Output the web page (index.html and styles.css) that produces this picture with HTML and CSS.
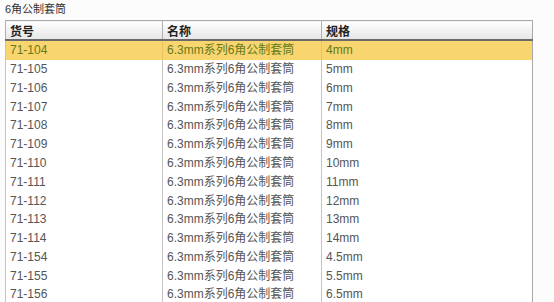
FILE: index.html
```html
<!DOCTYPE html>
<html>
<head>
<meta charset="utf-8">
<link rel="stylesheet" href="styles.css">
</head>
<body>
<div class="title">6角公制套筒</div>
<table class="grid">
<thead>
<tr><th class="c1">货号</th><th class="c2">名称</th><th class="c3">规格</th></tr>
</thead>
<tbody>
<tr class="sel"><td>71-104</td><td>6.3mm系列6角公制套筒</td><td>4mm</td></tr>
<tr><td>71-105</td><td>6.3mm系列6角公制套筒</td><td>5mm</td></tr>
<tr><td>71-106</td><td>6.3mm系列6角公制套筒</td><td>6mm</td></tr>
<tr><td>71-107</td><td>6.3mm系列6角公制套筒</td><td>7mm</td></tr>
<tr><td>71-108</td><td>6.3mm系列6角公制套筒</td><td>8mm</td></tr>
<tr><td>71-109</td><td>6.3mm系列6角公制套筒</td><td>9mm</td></tr>
<tr><td>71-110</td><td>6.3mm系列6角公制套筒</td><td>10mm</td></tr>
<tr><td>71-111</td><td>6.3mm系列6角公制套筒</td><td>11mm</td></tr>
<tr><td>71-112</td><td>6.3mm系列6角公制套筒</td><td>12mm</td></tr>
<tr><td>71-113</td><td>6.3mm系列6角公制套筒</td><td>13mm</td></tr>
<tr><td>71-114</td><td>6.3mm系列6角公制套筒</td><td>14mm</td></tr>
<tr><td>71-154</td><td>6.3mm系列6角公制套筒</td><td>4.5mm</td></tr>
<tr><td>71-155</td><td>6.3mm系列6角公制套筒</td><td>5.5mm</td></tr>
<tr><td>71-156</td><td>6.3mm系列6角公制套筒</td><td>6.5mm</td></tr>
</tbody>
</table>
</body>
</html>
```
FILE: styles.css
```css
html, body {
  margin: 0;
  background: #fcfcfc;
}
body {
  padding: 2px 5px 0 5px;
  font-family: "Liberation Sans", "Noto Sans CJK SC", sans-serif;
  color: #555;
}
.title {
  font-size: 11px;
  line-height: 14px;
  color: #333;
  padding-left: 0;
  height: 18px;
}
.grid {
  border-collapse: collapse;
  width: 528px;
  table-layout: fixed;
  background: #fff;
  border: 1px solid #a8a8a8;
  border-bottom: none;
}
.grid th {
  height: 18px;
  text-align: left;
  font-size: 12px;
  font-weight: bold;
  color: #222;
  padding: 0 4px;
  background: linear-gradient(#ffffff, #e6e6e6);
  border-left: 1px solid #b0b0b0;
  border-bottom: 2px solid #6a6a6a;
}
.grid th.c1 { width: 148px; }
.grid th.c2 { width: 150px; }
.grid td {
  height: 18.77px;
  padding: 0 4px;
  font-size: 12px;
  line-height: 14px;
  border-left: 1px solid #c4c4c4;
  color: #555;
  white-space: nowrap;
}
.grid tr.sel td {
  background: #f8d56e;
  color: #667a18;
  border-left-color: #e8c460;
}
```
